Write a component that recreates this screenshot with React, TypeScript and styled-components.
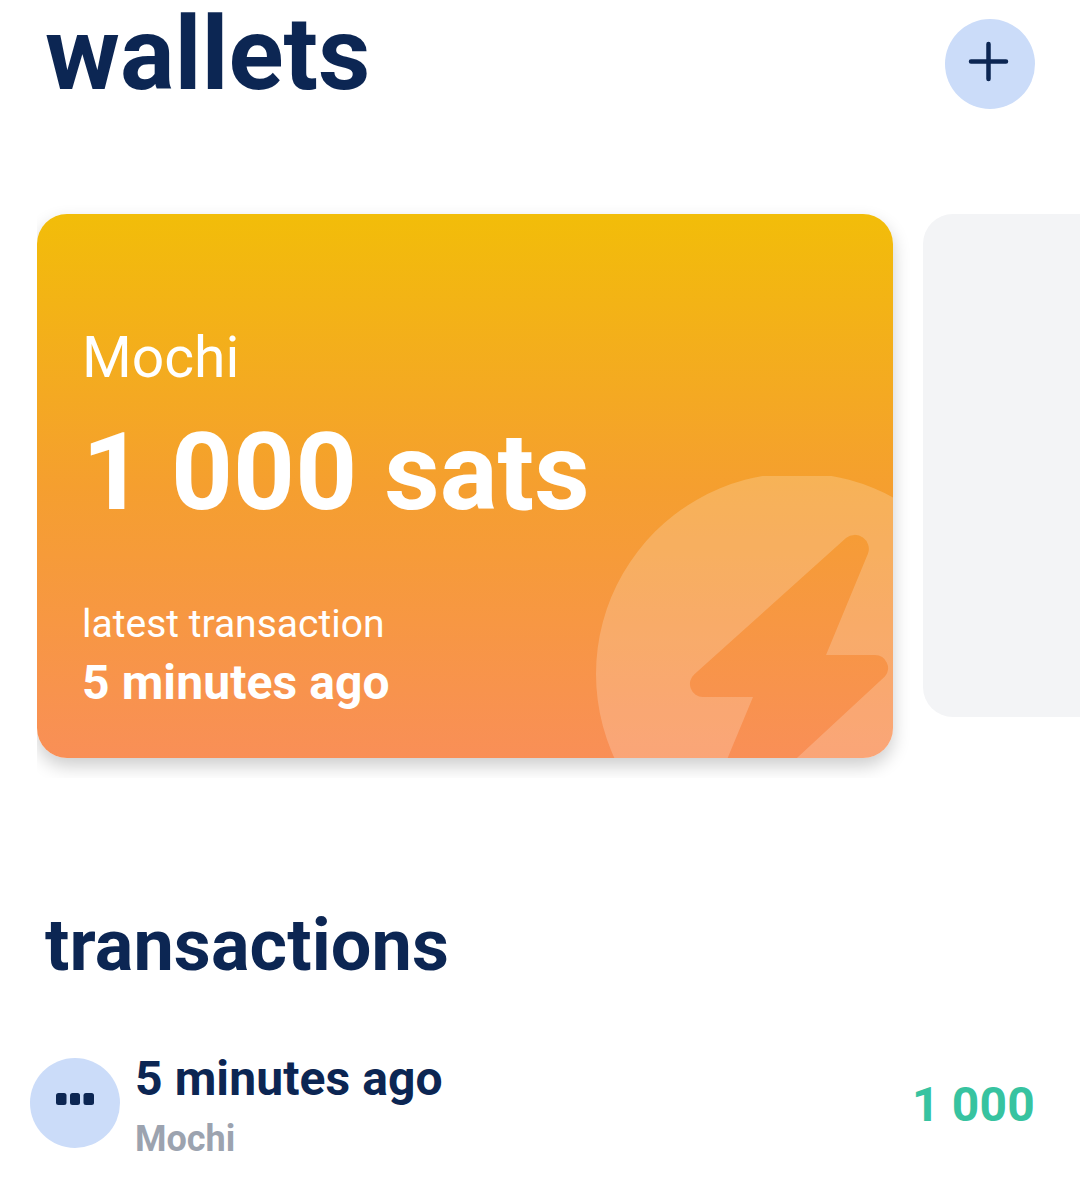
import React from "react";
import styled, { createGlobalStyle } from "styled-components";

const Global = createGlobalStyle`
  html, body { margin: 0; padding: 0; background: #fff; }
  body { font-family: Roboto, "Liberation Sans", sans-serif; }
`;

const Page = styled.main`
  width: 1080px;
  height: 1179px;
  overflow: hidden;
  background: #fff;
  color: #0c2653;
`;

const Header = styled.header`
  display: flex;
  justify-content: space-between;
  align-items: flex-start;
  padding: 0 45px;
  height: 109px;
`;

const Title = styled.h1`
  margin: 3px 0 0;
  font-size: 102px;
  line-height: 102px;
  font-weight: 700;
`;

const RoundIcon = styled.div`
  width: 90px;
  height: 90px;
  border-radius: 50%;
  background: #cbdcf9;
  display: flex;
  align-items: center;
  justify-content: center;
  flex: none;
`;

const AddButton = styled(RoundIcon)`
  margin-top: 19px;
`;

const Carousel = styled.section`
  margin: 96px 0 0 37px;
  padding: 9px 0 20px;
  display: flex;
  gap: 30px;
  align-items: flex-start;
  overflow: hidden;
`;

const Card = styled.article`
  position: relative;
  flex: none;
  box-sizing: border-box;
  width: 856px;
  height: 544px;
  padding: 111px 45px 0 46px;
  border-radius: 30px;
  overflow: hidden;
  color: #fff;
  background: linear-gradient(180deg, #f2bd09 0%, #f59f2f 50%, #f98f57 100%);
  box-shadow: 0 8px 18px rgba(0, 0, 0, 0.2);
`;

const Ghost = styled.div`
  flex: none;
  width: 300px;
  height: 503px;
  border-radius: 30px;
  background: #f3f4f6;
`;

const Watermark = styled.svg`
  position: absolute;
  right: 0;
  bottom: 0;
  width: 320px;
  height: 282px;
`;

const CardName = styled.div`
  font-size: 57px;
  line-height: 66px;
  font-weight: 400;
  margin-left: -1px;
`;

const Balance = styled.div`
  margin-top: 18px;
  font-size: 108px;
  line-height: 126px;
  font-weight: 700;
  margin-left: -1px;
  letter-spacing: 0.1px;
`;

const CardLabel = styled.div`
  margin-top: 62px;
  font-size: 39px;
  line-height: 54px;
  font-weight: 400;
  margin-left: -1px;
`;

const CardTime = styled.div`
  margin-top: 5px;
  font-size: 48px;
  line-height: 54px;
  font-weight: 700;
  margin-left: -1px;
  letter-spacing: 0.1px;
`;

const SectionTitle = styled.h2`
  margin: 126px 0 0 45px;
  font-size: 72px;
  line-height: 84px;
  font-weight: 700;
  letter-spacing: 0.1px;
`;

const TxRow = styled.div`
  display: flex;
  align-items: flex-start;
  margin-top: 70px;
  padding: 0 45px 0 30px;
`;

const TxText = styled.div`
  flex: 1;
  margin: -6px 0 0 15px;
`;

const TxTime = styled.div`
  font-size: 48px;
  line-height: 54px;
  font-weight: 700;
  letter-spacing: 0.1px;
`;

const TxWallet = styled.div`
  margin-top: 9px;
  font-size: 36px;
  line-height: 48px;
  font-weight: 700;
  color: #9ca3af;
`;

const Amount = styled.div`
  margin-top: 20px;
  font-size: 48px;
  line-height: 54px;
  font-weight: 700;
  letter-spacing: 0.2px;
  color: #37c3a0;
`;

export default function App() {
  return (
    <Page>
      <Global />
      <Header>
        <Title>wallets</Title>
        <AddButton>
          <svg width="46" height="46" viewBox="0 0 46 46" fill="none" stroke="#0c2653" strokeWidth="4.5" strokeLinecap="round">
            <path d="M21.500 3v35M4 20.500h35" />
          </svg>
        </AddButton>
      </Header>
      <Carousel>
        <Card>
          <Watermark viewBox="573 476 320 282">
            <path
              fillRule="evenodd"
              fill="#fff"
              fillOpacity="0.2"
              d="M797 473a201 201 0 1 0 0.01 0ZM846 538L694.400 674.200A13 13 0 0 0 703 697H753L699 827H722.500L884.600 676.700A13 13 0 0 0 875 655H826L868 553.600A14 14 0 0 0 846 538Z"
            />
          </Watermark>
          <CardName>Mochi</CardName>
          <Balance>1 000 sats</Balance>
          <CardLabel>latest transaction</CardLabel>
          <CardTime>5 minutes ago</CardTime>
        </Card>
        <Ghost />
      </Carousel>
      <SectionTitle>transactions</SectionTitle>
      <TxRow>
        <RoundIcon>
          <svg width="40" height="28" viewBox="0 0 40 28" fill="#0c2653">
            <rect x="1" y="4" width="10.500" height="12" rx="2.500" />
            <rect x="15" y="4" width="10" height="12" rx="2.500" />
            <rect x="28.500" y="4" width="10.500" height="12" rx="2.500" />
          </svg>
        </RoundIcon>
        <TxText>
          <TxTime>5 minutes ago</TxTime>
          <TxWallet>Mochi</TxWallet>
        </TxText>
        <Amount>1 000</Amount>
      </TxRow>
    </Page>
  );
}
